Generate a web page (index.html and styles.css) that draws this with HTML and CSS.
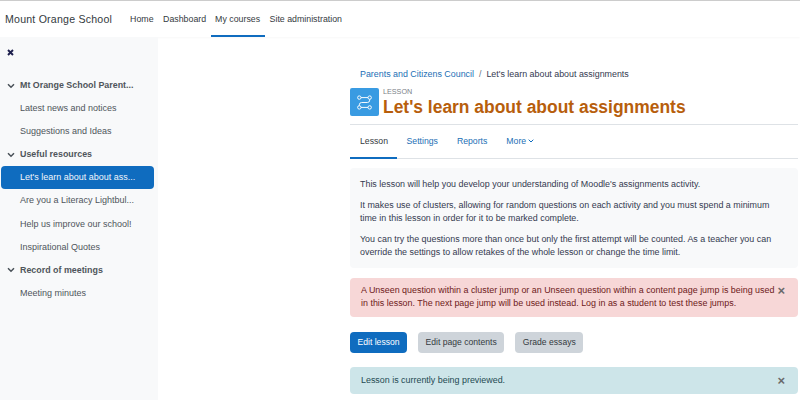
FILE: index.html
```html
<!DOCTYPE html>
<html lang="en">
<head>
<meta charset="utf-8">
<title>Let's learn about about assignments</title>
<link rel="stylesheet" href="styles.css">
</head>
<body>
<header class="navbar">
  <span class="brand">Mount Orange School</span>
  <nav class="primary">
    <a>Home</a><a>Dashboard</a><a class="active">My courses</a><a>Site administration</a>
  </nav>
</header>
<div class="layout">
  <aside class="drawer">
    <div class="close"><svg width="7" height="7" viewBox="0 0 7 7"><path d="M1 1 6 6M6 1 1 6" stroke="#1d1f4d" stroke-width="1.9"/></svg></div>
    <ul class="index">
      <li class="section"><svg class="chev" width="8" height="6" viewBox="0 0 8 6"><path d="M1 1.2 4 4.2 7 1.2" fill="none" stroke="#495057" stroke-width="1.5"/></svg>Mt Orange School Parent...</li>
      <li>Latest news and notices</li>
      <li>Suggestions and Ideas</li>
      <li class="section"><svg class="chev" width="8" height="6" viewBox="0 0 8 6"><path d="M1 1.2 4 4.2 7 1.2" fill="none" stroke="#495057" stroke-width="1.5"/></svg>Useful resources</li>
      <li class="current">Let's learn about about ass...</li>
      <li>Are you a Literacy Lightbul...</li>
      <li>Help us improve our school!</li>
      <li>Inspirational Quotes</li>
      <li class="section"><svg class="chev" width="8" height="6" viewBox="0 0 8 6"><path d="M1 1.2 4 4.2 7 1.2" fill="none" stroke="#495057" stroke-width="1.5"/></svg>Record of meetings</li>
      <li>Meeting minutes</li>
    </ul>
  </aside>
  <main class="main">
    <div class="crumbs"><a>Parents and Citizens Council</a><span class="sep">/</span><span>Let's learn about about assignments</span></div>
    <div class="head">
      <div class="icon"><svg width="17" height="17" viewBox="0 0 18 18" fill="none" stroke="#fff" stroke-width="1"><circle cx="3.5" cy="3.8" r="1.8"/><circle cx="14.5" cy="3.8" r="1.8"/><circle cx="3.5" cy="14.2" r="1.8"/><circle cx="14.5" cy="14.2" r="1.8"/><path d="M5.3 3.8H12.7M14.5 5.6V6.5Q14.5 9 12 9H6Q3.5 9 3.5 11.5V12.4M5.3 14.2H12.7"/></svg></div>
      <div class="titles"><div class="kicker">LESSON</div><h1>Let's learn about about assignments</h1></div>
    </div>
    <div class="tabs"><a class="active">Lesson</a><a>Settings</a><a>Reports</a><a>More<svg class="more" width="6" height="4" viewBox="0 0 6 4"><path d="M.7.7 3 3 5.3.7" fill="none" stroke="#0f6cbf" stroke-width="1"/></svg></a></div>
    <section class="intro">
      <p>This lesson will help you develop your understanding of Moodle's assignments activity.</p>
      <p>It makes use of clusters, allowing for random questions on each activity and you must spend a minimum time in this lesson in order for it to be marked complete.</p>
      <p>You can try the questions more than once but only the first attempt will be counted. As a teacher you can override the settings to allow retakes of the whole lesson or change the time limit.</p>
    </section>
    <div class="alert danger"><span>A Unseen question within a cluster jump or an Unseen question within a content page jump is being used in this lesson. The next page jump will be used instead. Log in as a student to test these jumps.</span><b class="x">×</b></div>
    <div class="buttons"><a class="btn primary-btn">Edit lesson</a><a class="btn">Edit page contents</a><a class="btn">Grade essays</a></div>
    <div class="alert info"><span>Lesson is currently being previewed.</span><b class="x">×</b></div>
  </main>
</div>
</body>
</html>
```
FILE: styles.css
```css
* { box-sizing: border-box; }
html, body { margin: 0; height: 400px; overflow: hidden; background: #fff; }
body { font-family: "Liberation Sans", Arial, sans-serif; font-size: 8.92px; color: #343a40; }
a { text-decoration: none; }
.navbar { height: 37px; border-top: 1px solid #ccc; display: flex; align-items: stretch; padding-left: 5px; background: #fff; box-shadow: 0 1px 2px rgba(0,0,0,.03); }
.brand { font-size: 10.6px; line-height: 36px; margin-right: 13px; color: #343a40; letter-spacing: .02em; }
.primary { display: flex; }
.primary a { padding: 0 4.5px 0 5px; line-height: 36px; height: 36px; color: #343a40; font-size: 8.8px; }
.primary a.active { border-bottom: 2px solid #0f6cbf; padding: 0 4.5px; }
.layout { display: flex; height: 363px; }
.drawer { width: 158px; flex: none; background: #f8f9fa; padding: 12px 4px 0 1px; }
.close { height: 8px; margin: 0 0 17px 6px; line-height: 0; }
.index { list-style: none; margin: 0; padding: 0; }
.index li { height: 23.1px; line-height: 23.1px; padding-left: 19px; color: #4f555b; font-size: 9px; white-space: nowrap; }
.index li.section { font-weight: 700; font-size: 8.9px; display: flex; align-items: center; padding-left: 6px; }
.chev { margin-right: 5px; flex: none; }
.index li.current { background: #0f6cbf; color: #f2f6fb; border-radius: 4px; }
.main { margin-left: 192px; width: 448px; padding-top: 31px; }
.crumbs { padding-left: 10px; height: 13px; line-height: 13px; font-size: 8.9px; color: #343a50; margin-bottom: 7px; white-space: nowrap; }
.crumbs a { color: #1c6fb5; }
.sep { margin: 0 5px; color: #6a737b; }
.head { display: flex; gap: 4px; height: 37px; border-bottom: 1px solid #dee2e6; }
.icon { width: 29px; height: 28px; border-radius: 2px; background: #399be2; display: flex; align-items: center; justify-content: center; }
.titles { min-width: 0; }
.kicker { font-size: 7.2px; line-height: 8px; color: #7a8188; }
h1 { margin: 1px 0 0; font-size: 17.45px; line-height: 20px; font-weight: 700; color: #b75e0c; white-space: nowrap; }
.tabs { display: flex; height: 34px; border-bottom: 1px solid #dee2e6; margin-bottom: 9px; }
.tabs a { padding: 0 9.5px; line-height: 32px; height: 34px; color: #1c6fb5; font-size: 8.7px; }
.tabs a.active { color: #343a40; border-bottom: 2px solid #0f6cbf; padding: 0 9px 0 10px; }
.more { margin-left: 2px; vertical-align: 1px; }
.intro { background: #f8f9fa; border-radius: 4px; padding: 9.5px 10px; line-height: 13px; color: #343a50; height: 100px; }
.intro p { margin: 0 0 8px; }
.alert { display: flex; align-items: flex-start; justify-content: space-between; border-radius: 4px; padding: 6px 13px 6px 11px; line-height: 13px; }
.danger { background: #f7d7d7; color: #6e1a1a; margin-top: 10px; height: 39px; }
.info { background: #cde5e9; color: #1f4a52; height: 27px; padding-top: 7px; }
.x { font-size: 13px; line-height: 13px; color: #6a6a6a; flex: none; }
.buttons { display: flex; gap: 11px; margin: 15px 0 14px; }
.btn { height: 21px; line-height: 21px; padding: 0 7.5px; border-radius: 4px; background: #ced4da; color: #343a40; font-size: 8.6px; }
.primary-btn { background: #0f6cbf; color: #fff; }
```
